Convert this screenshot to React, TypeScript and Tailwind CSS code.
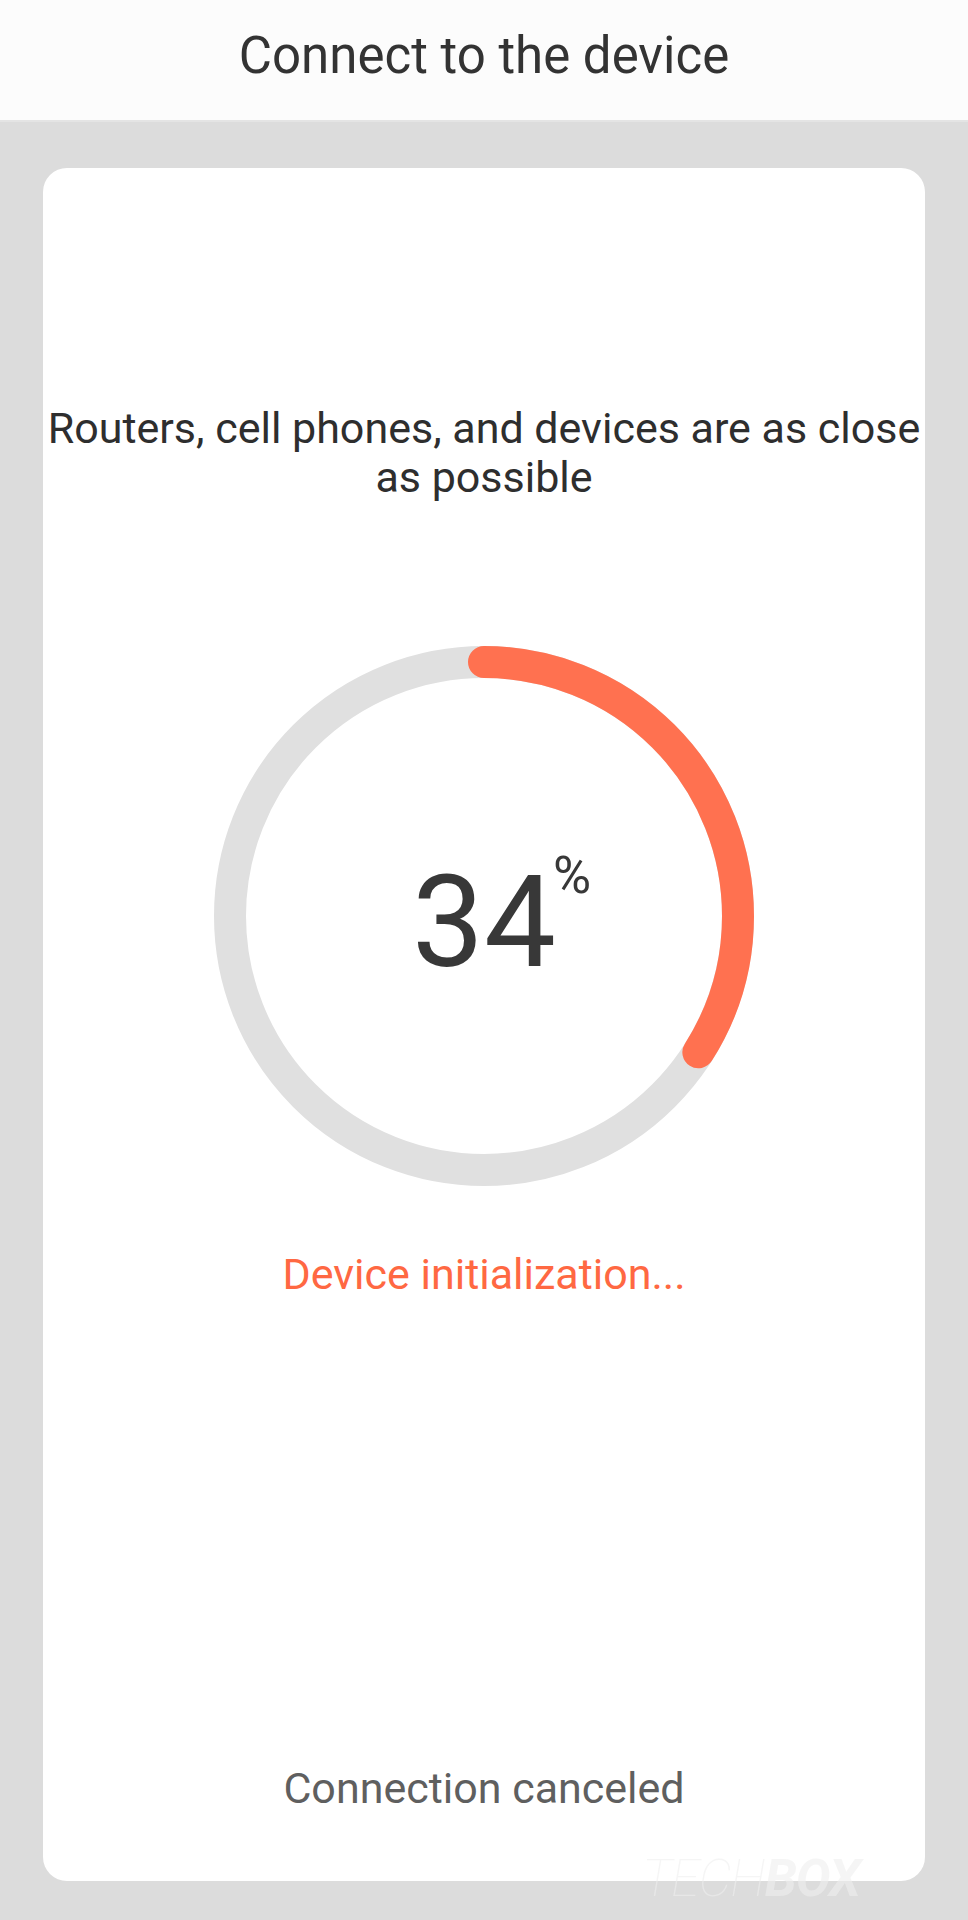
const PERCENT = 34;
const RADIUS = 254;
const STROKE = 32;
const CIRC = 2 * Math.PI * RADIUS;

function ProgressRing({ value }: { value: number }) {
  const dash = (value / 100) * CIRC;

  return (
    <div className="relative flex h-[540px] w-[540px] items-center justify-center">
      <svg width="540" height="540" viewBox="0 0 540 540" className="absolute inset-0">
        <circle cx="270" cy="270" r={RADIUS} fill="none" stroke="#e0e0e0" strokeWidth={STROKE} />
        <circle
          cx="270"
          cy="270"
          r={RADIUS}
          fill="none"
          stroke="#ff7150"
          strokeWidth={STROKE}
          strokeLinecap="round"
          strokeDasharray={`${dash} ${CIRC}`}
          transform="rotate(-90 270 270)"
        />
      </svg>
      <span className="relative mt-[12px] text-[128px] leading-none text-[#383838]">
        {value}
        <span className="absolute left-full top-[-8px] ml-[-3px] text-[52px] leading-none text-[#383838]">%</span>
      </span>
    </div>
  );
}

export default function App() {
  return (
    <div className="relative flex h-[1920px] w-full flex-col bg-[#dcdcdc] font-['Roboto','Liberation_Sans',sans-serif]">
      <header className="flex h-[122px] shrink-0 items-center justify-center border-b-2 border-[#e4e4e4] bg-[#fcfcfc] pb-[10px]">
        <h1 className="text-[51px] leading-none text-[#333333]">Connect to the device</h1>
      </header>

      <main className="flex flex-1 flex-col px-[43px] pt-[46px] pb-[39px]">
        <section className="flex flex-1 flex-col items-center rounded-[24px] bg-white">
          <p className="pt-[236px] text-center text-[43px] leading-[49px] text-[#2e2e2e]">
            Routers, cell phones, and devices are as close as possible
          </p>

          <div className="mt-[144px]">
            <ProgressRing value={PERCENT} />
          </div>

          <p className="mt-[64px] text-[43px] leading-[49px] text-[#ff6842]">Device initialization...</p>

          <div className="flex-1" />

          <button className="pb-[68px] text-[43px] leading-[49px] text-[#5f5f5f]">Connection canceled</button>
        </section>
      </main>

      {/* watermark */}
      <div className="pointer-events-none absolute right-[108px] bottom-[15px] text-[52px] italic leading-none tracking-[-0.02em] text-[rgba(238,238,238,0.6)]">
        <span className="font-thin">TECH</span>
        <span className="font-bold">BOX</span>
      </div>
    </div>
  );
}
